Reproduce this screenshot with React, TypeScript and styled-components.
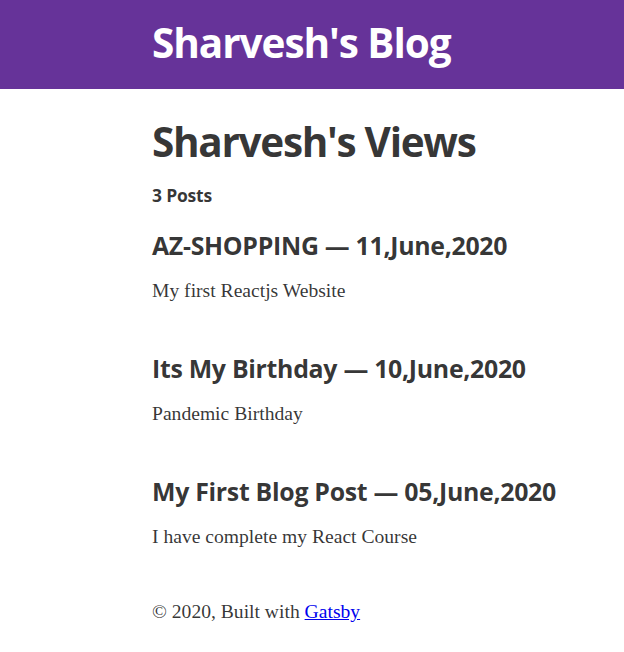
import React from "react";
import styled, { createGlobalStyle } from "styled-components";

const GlobalStyle = createGlobalStyle`
  html, body { margin: 0; padding: 0; background: #ffffff; }
  body {
    font-family: "Liberation Serif", serif;
    font-size: 19.6px;
    color: hsla(0, 0%, 0%, 0.8);
  }
`;

const heading = `"Open Sans", "Noto Sans", sans-serif`;

const Header = styled.header`
  background: #663399;
  padding: 20px 0 24px 152px;
`;

const SiteTitle = styled.h1`
  margin: 0;
  font-family: ${heading};
  font-weight: 700;
  font-size: 40.5px;
  line-height: 45px;
  letter-spacing: -1.05px;
  color: #ffffff;
  white-space: nowrap;
`;

const Main = styled.main`
  padding: 30px 20px 0 152px;
`;

const PageTitle = styled.h1`
  margin: 0;
  font-family: ${heading};
  font-weight: 700;
  font-size: 40.5px;
  line-height: 45px;
  letter-spacing: -1.3px;
  color: hsla(0, 0%, 0%, 0.8);
  white-space: nowrap;
`;

const Count = styled.h4`
  margin: 22px 0 0;
  font-family: ${heading};
  font-weight: 700;
  font-size: 17.5px;
  line-height: 19.8px;
  letter-spacing: -0.2px;
`;

const PostList = styled.div`
  display: flex;
  flex-direction: column;
  gap: 50.5px;
  margin-top: 25.8px;
`;

const Post = styled.article`
  display: flex;
  flex-direction: column;
  gap: 19px;
`;

const PostTitle = styled.h3`
  margin: 0;
  font-family: ${heading};
  font-weight: 700;
  font-size: 24.9px;
  line-height: 27.4px;
  letter-spacing: -0.3px;
  white-space: nowrap;
`;

const Excerpt = styled.p`
  margin: 0;
  line-height: 26.1px;
`;

const Footer = styled.footer`
  margin-top: 49px;
  line-height: 26.1px;
  a { color: #0000ee; text-decoration: underline; }
`;

const posts = [
  { title: "AZ-SHOPPING", date: "11,June,2020", excerpt: "My first Reactjs Website" },
  { title: "Its My Birthday", date: "10,June,2020", excerpt: "Pandemic Birthday" },
  { title: "My First Blog Post", date: "05,June,2020", excerpt: "I have complete my React Course" },
];

export default function App() {
  return (
    <>
      <GlobalStyle />
      <Header>
        <SiteTitle>Sharvesh's Blog</SiteTitle>
      </Header>
      <Main>
        <PageTitle>Sharvesh's Views</PageTitle>
        <Count>3 Posts</Count>
        <PostList>
          {posts.map((p) => (
            <Post key={p.title}>
              <PostTitle>
                {p.title} — {p.date}
              </PostTitle>
              <Excerpt>{p.excerpt}</Excerpt>
            </Post>
          ))}
        </PostList>
        <Footer>
          © 2020, Built with <a href="#">Gatsby</a>
        </Footer>
      </Main>
    </>
  );
}
